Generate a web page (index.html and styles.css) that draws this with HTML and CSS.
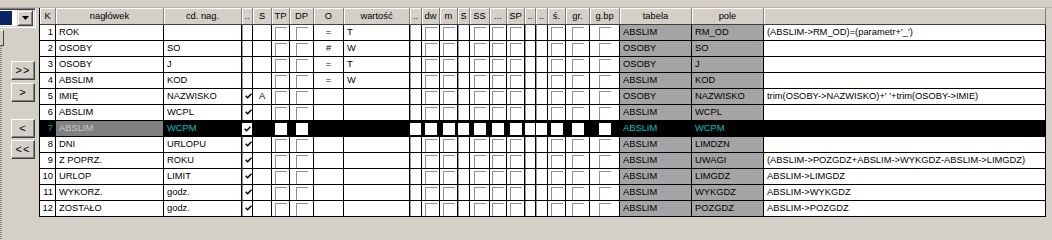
FILE: index.html
```html
<!DOCTYPE html>
<html lang="pl">
<head>
  <meta charset="UTF-8">
  <title>Definicja kolumn</title>
  <link rel="stylesheet" href="styles.css">
</head>
<body>
  <div class="topbar"></div>
  <div class="main">
    <div class="side">
      <div class="combo">
        <span class="combo-val"></span>
        <span class="combo-btn"><svg width="7" height="4" viewBox="0 0 7 4"><path d="M0 0H7L3.5 4Z" fill="#000"/></svg></span>
      </div>
      <div class="stub"></div>
      <div class="lower">
        <button class="nav">&gt;&gt;</button>
        <button class="nav near">&gt;</button>
        <button class="nav far">&lt;</button>
        <button class="nav close">&lt;&lt;</button>
      </div>
    </div>
    <div class="grid" id="grid"></div>
  </div>
  <script>
    const head = ['K','nagłówek','cd. nag.','..','S','TP','DP','O','wartość','..','dw','m','S','SS','...','SP','..','..','ś.','gr.','g.bp','tabela','pole',''];
    const kinds = ['num','txt nag','txt cd','nc','ctr','cb','cb','ctr','txt','nc','cb','cb','nc','cb','cb','cb','nc','nc','cb','cb','cb','txt tab','txt tab','txt'];
    const dataCol = {0:0, 1:1, 2:2, 4:4, 7:5, 8:6, 21:7, 22:8, 23:9};
    const rows = [
      [1,'ROK','',0,'','=','T','ABSLIM','RM_OD',"(ABSLIM->RM_OD)=(parametr+'_')"],
      [2,'OSOBY','SO',0,'','#','W','OSOBY','SO',''],
      [3,'OSOBY','J',0,'','=','T','OSOBY','J',''],
      [4,'ABSLIM','KOD',0,'','=','W','ABSLIM','KOD',''],
      [5,'IMIĘ','NAZWISKO',1,'A','','','OSOBY','NAZWISKO',"trim(OSOBY->NAZWISKO)+' '+trim(OSOBY->IMIE)"],
      [6,'ABSLIM','WCPL',1,'','','','ABSLIM','WCPL',''],
      [7,'ABSLIM','WCPM',1,'','','','ABSLIM','WCPM',''],
      [8,'DNI','URLOPU',1,'','','','ABSLIM','LIMDZN',''],
      [9,'Z POPRZ.','ROKU',1,'','','','ABSLIM','UWAGI','(ABSLIM->POZGDZ+ABSLIM->WYKGDZ-ABSLIM->LIMGDZ)'],
      [10,'URLOP','LIMIT',1,'','','','ABSLIM','LIMGDZ','ABSLIM->LIMGDZ'],
      [11,'WYKORZ.','godz.',1,'','','','ABSLIM','WYKGDZ','ABSLIM->WYKGDZ'],
      [12,'ZOSTAŁO','godz.',1,'','','','ABSLIM','POZGDZ','ABSLIM->POZGDZ']
    ];
    const tick = '<svg width="7" height="6" viewBox="0 0 7 6"><path d="M0.6 2.8L2.6 4.8L6.4 0.8" fill="none" stroke="#000" stroke-width="1.4"/></svg>';
    const grid = document.getElementById('grid');

    const hr = document.createElement('div');
    hr.className = 'row head';
    head.forEach(h => {
      const c = document.createElement('div');
      c.className = 'cell';
      c.textContent = h;
      hr.appendChild(c);
    });
    grid.appendChild(hr);

    rows.forEach(r => {
      const row = document.createElement('div');
      row.className = 'row' + (r[0] === 7 ? ' sel' : '');
      kinds.forEach((k, j) => {
        const c = document.createElement('div');
        c.className = 'cell ' + k;
        if (k === 'cb' || k === 'nc') {
          const b = document.createElement('span');
          b.className = 'box';
          if (j === 3 && r[3]) b.innerHTML = tick;
          c.appendChild(b);
        } else if (j in dataCol) {
          c.textContent = r[dataCol[j]];
        }
        row.appendChild(c);
      });
      grid.appendChild(row);
    });
  </script>
</body>
</html>
```

FILE: styles.css
```css
* { margin: 0; padding: 0; box-sizing: border-box; }
body {
  background: #d4d0c8;
  font-family: "Liberation Sans", Arial, sans-serif;
  font-size: 9.33px;
  color: #000;
  width: 1052px;
  height: 240px;
  overflow: hidden;
}
.topbar {
  height: 8px;
  border-bottom: 1px solid #bab6ae;
}
.main {
  display: flex;
  height: 232px;
}

/* left panel */
.side {
  width: 39px;
  flex: none;
  display: flex;
  flex-direction: column;
  align-items: flex-start;
}
.combo {
  width: 36px;
  height: 20px;
  display: flex;
  align-items: center;
  gap: 5px;
  padding: 2px 2px 2px 0;
  background: #fff;
  border-top: 1px solid #808080;
  border-right: 1px solid #fff;
  border-bottom: 1px solid #fff;
  box-shadow: inset 0 1px 0 #404040, inset -1px -1px 0 #d4d0c8;
}
.combo-val {
  width: 13px;
  height: 14px;
  background: #0a246a;
}
.combo-btn {
  width: 16px;
  height: 16px;
  flex: none;
  display: flex;
  align-items: center;
  justify-content: center;
  background: #d4d0c8;
  border: 1px solid;
  border-color: #d4d0c8 #404040 #404040 #d4d0c8;
  box-shadow: inset 1px 1px 0 #fff, inset -1px -1px 0 #808080;
}
.combo-btn svg { display: block; }
.stub {
  margin-top: 2px;
  width: 4px;
  height: 16px;
  border: 1px solid;
  border-color: #fff #404040 #404040 transparent;
}
.lower {
  flex: 1;
  align-self: stretch;
  display: flex;
  flex-direction: column;
  padding: 15px 0 0 11px;
  background: repeating-linear-gradient(to bottom, #8c8880 0 1px, transparent 1px 2px) 0 0 / 2px 100% no-repeat;
}
.nav {
  width: 24px;
  height: 19px;
  font-family: "Liberation Sans", Arial, sans-serif;
  font-size: 11px;
  letter-spacing: 1px;
  line-height: 15px;
  color: #000;
  background: #d4d0c8;
  border: 1px solid;
  border-color: #fff #404040 #404040 #fff;
  box-shadow: inset -1px -1px 0 #808080;
}
.nav.near { margin-top: 3px; }
.nav.far { margin-top: 17px; }
.nav.close { margin-top: 2px; }

/* grid */
.grid {
  width: 1007px;
  align-self: flex-start;
  border-left: 1px solid #000;
}
.row {
  display: grid;
  grid-template-columns: 16px 108px 78px 11px 19px 18px 24px 30px 66px 12px 18px 18px 12px 20px 17px 18px 11px 12px 18px 24px 30px 72px 72px 282px;
  height: 16px;
  background: #fff;
  border-bottom: 1px solid #000;
}
.cell {
  border-right: 1px solid #000;
  line-height: 15px;
  padding: 0 3px;
  white-space: nowrap;
  overflow: hidden;
}
.head {
  height: 17px;
  background: #d4d0c8;
  border-bottom: 1px solid #404040;
}
.head .cell {
  padding: 0;
  text-align: center;
  line-height: 16px;
  border-right: 1px solid #808080;
  box-shadow: inset 1px 1px 0 #fff;
}
.num { text-align: right; padding: 0 2px 0 0; }
.ctr { text-align: center; padding: 0; }
.tab { background: #a4a4a4; }
.cb {
  padding: 0;
  display: flex;
  justify-content: center;
}
.cb .box {
  width: 12px;
  height: 13px;
  margin-top: 2px;
  border-left: 1px solid #9088b0;
  border-top: 1px solid #9088b0;
}
.nc { padding: 0; }
.nc .box {
  display: block;
  height: 100%;
  padding: 4px 0 0 2px;
  border-left: 1px solid #9890c4;
}
.nc .box svg { display: block; }

/* selected row */
.sel .cell { background: #000; color: #00c4c8; }
.sel .num { color: #00a8b0; }
.sel .nag { background: #808080; color: #c8c8c8; }
.sel .cb .box,
.sel .nc .box {
  height: 12px;
  margin-top: 2px;
  background: #fff;
  border: 0;
}
.sel .nc .box { padding-top: 3px; }
```
